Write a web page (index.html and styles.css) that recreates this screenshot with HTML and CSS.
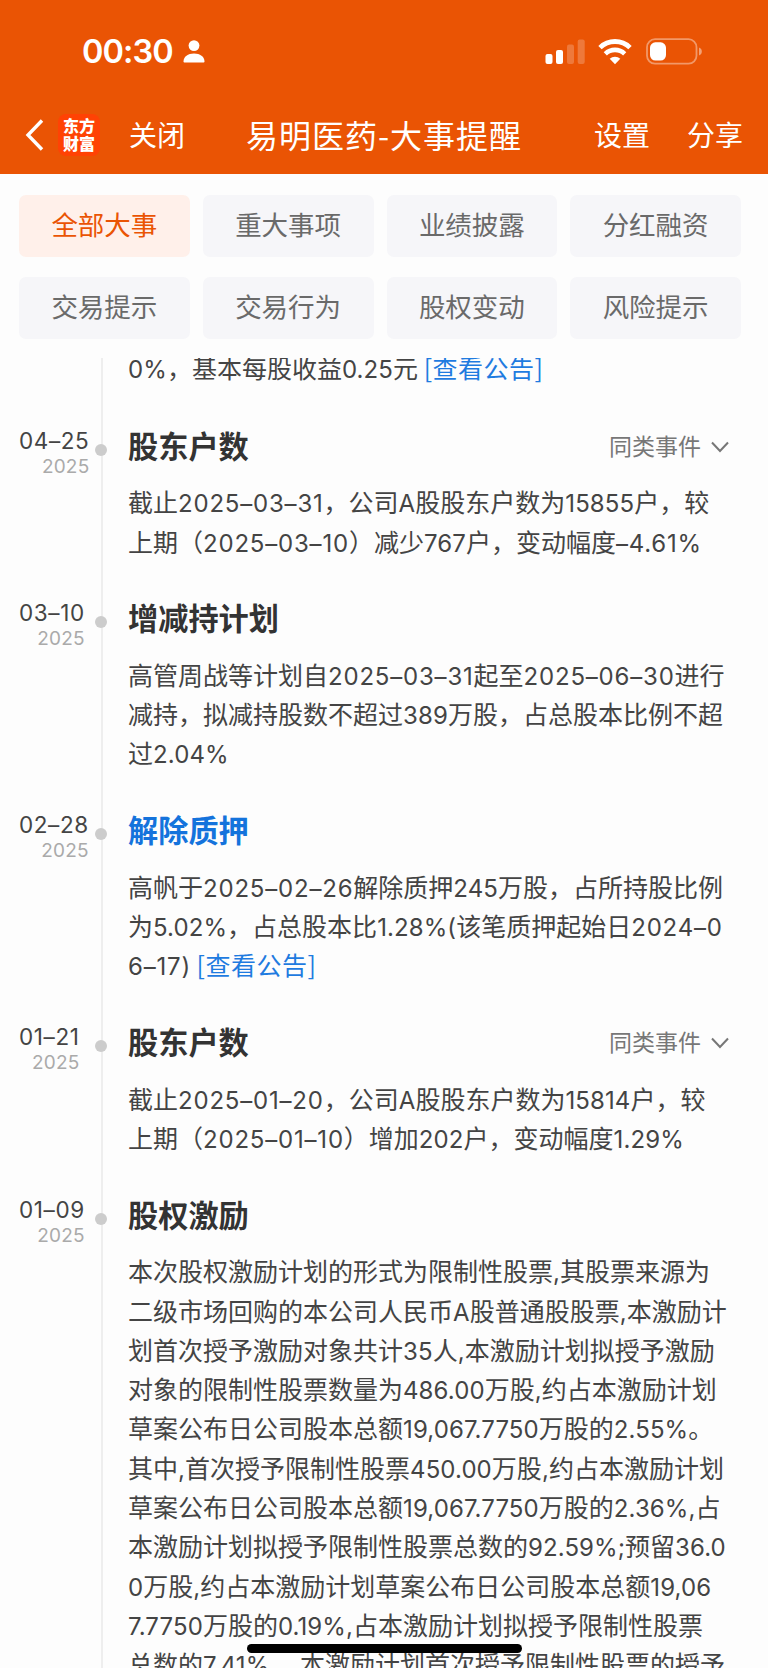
FILE: index.html
```
<!DOCTYPE html>
<html lang="zh-CN">

<head>
    <meta charset="utf-8">
    <title>易明医药-大事提醒</title>
    <link rel="stylesheet" href="styles.css">
</head>

<body>
    <header class="header">
        <div class="status-bar">
            <span class="time">00:30</span>
            <svg class="person" width="22" height="23" viewBox="0 0 22 23" fill="#fff">
                <circle cx="11" cy="5.6" r="5.4" />
                <path d="M0.5 21.5C0.5 16.5 5 13.4 11 13.4s10.5 3.1 10.5 8.1c0 .8-.5 1-1.2 1H1.7c-.7 0-1.2-.2-1.2-1z" />
            </svg>
            <div class="status-icons">
                <svg width="40" height="26" viewBox="0 0 40 26" fill="#fff">
                    <rect x="0.5" y="15" width="7" height="10" rx="2" />
                    <rect x="11" y="11" width="7" height="14" rx="2" />
                    <rect x="22" y="5.5" width="7" height="19.5" rx="2" opacity=".22" />
                    <rect x="32.7" y="0.5" width="7" height="24.5" rx="2" opacity=".22" />
                </svg>
                <svg class="wifi" width="34" height="26" viewBox="0 0 34 26">
                    <path d="M2 8.6a21.5 21.5 0 0 1 30 0" fill="none" stroke="#fff" stroke-width="4.8" />
                    <path d="M7.3 14.8a14 14 0 0 1 19.4 0" fill="none" stroke="#fff" stroke-width="4.6" />
                    <path d="M11.7 19.8a7.6 7.6 0 0 1 10.6 0L17 25.2z" fill="#fff" />
                </svg>
                <svg class="battery" width="57" height="27" viewBox="0 0 57 27">
                    <rect x="1" y="1.2" width="49.5" height="24.5" rx="8" fill="none" stroke="#fff" stroke-opacity=".4" stroke-width="1.8" />
                    <rect x="4" y="4.3" width="16" height="18.2" rx="5.4" fill="#fff" />
                    <path d="M53 9.5c3.8 1.2 3.8 6.800 0 8z" fill="#fff" fill-opacity=".45" />
                </svg>
            </div>
        </div>
        <nav class="nav-bar">
            <svg class="back" width="19" height="32" viewBox="0 0 19 32" fill="none" stroke="#fff" stroke-width="3.4">
                <path d="M17 1.5L3 16l14 14.500" />
            </svg>
            <div class="logo">东方<br>财富</div>
            <span class="close">关闭</span>
            <h1>易明医药-大事提醒</h1>
            <span class="setting">设置</span>
            <span class="share">分享</span>
        </nav>
    </header>

    <div class="tabs">
        <div class="tab active">全部大事</div>
        <div class="tab">重大事项</div>
        <div class="tab">业绩披露</div>
        <div class="tab">分红融资</div>
        <div class="tab">交易提示</div>
        <div class="tab">交易行为</div>
        <div class="tab">股权变动</div>
        <div class="tab">风险提示</div>
    </div>

    <main class="timeline">
        <section class="event first">
            <div class="content">
                <p><b>0%</b>，基本每股收益<b>0.25</b>元 <a>[查看公告]</a></p>
            </div>
        </section>

        <section class="event">
            <div class="date">04–25<small>2025</small></div>
            <div class="content">
                <div class="title">
                    <h2>股东户数</h2>
                    <span class="more">同类事件
                        <svg width="18" height="12" viewBox="0 0 18 12" fill="none" stroke="#777" stroke-width="2"><path d="M1 1.500l8 8.500 8-8.500" /></svg>
                    </span>
                </div>
                <p>截止<b class="d">2025–03–31</b>，公司<b>A</b>股股东户数为<b>15855</b>户，较<br>
                    上期（<b class="d">2025–03–10</b>）减少<b>767</b>户，变动幅度<b class="d">–4.61%</b></p>
            </div>
        </section>

        <section class="event">
            <div class="date">03–10<small>2025</small></div>
            <div class="content">
                <div class="title">
                    <h2>增减持计划</h2>
                </div>
                <p>高管周战等计划自<b class="d">2025–03–31</b>起至<b class="d">2025–06–30</b>进行<br>
                    减持，拟减持股数不超过<b>389</b>万股，占总股本比例不超<br>
                    过<b>2.04%</b></p>
            </div>
        </section>

        <section class="event">
            <div class="date">02–28<small>2025</small></div>
            <div class="content">
                <div class="title">
                    <h2 class="blue">解除质押</h2>
                </div>
                <p>高帆于<b class="d">2025–02–26</b>解除质押<b>245</b>万股，占所持股比例<br>
                    为<b>5.02%</b>，占总股本比<b>1.28%(</b>该笔质押起始日<b class="d">2024–0</b><br>
                    <b class="d">6–17)</b> <a>[查看公告]</a></p>
            </div>
        </section>

        <section class="event">
            <div class="date">01–21<small>2025</small></div>
            <div class="content">
                <div class="title">
                    <h2>股东户数</h2>
                    <span class="more">同类事件
                        <svg width="18" height="12" viewBox="0 0 18 12" fill="none" stroke="#777" stroke-width="2"><path d="M1 1.500l8 8.500 8-8.500" /></svg>
                    </span>
                </div>
                <p>截止<b class="d">2025–01–20</b>，公司<b>A</b>股股东户数为<b>15814</b>户，较<br>
                    上期（<b class="d">2025–01–10</b>）增加<b>202</b>户，变动幅度<b>1.29%</b></p>
            </div>
        </section>

        <section class="event">
            <div class="date">01–09<small>2025</small></div>
            <div class="content">
                <div class="title">
                    <h2>股权激励</h2>
                </div>
                <p>本次股权激励计划的形式为限制性股票<b>,</b>其股票来源为<br>
                    二级市场回购的本公司人民币<b>A</b>股普通股股票<b>,</b>本激励计<br>
                    划首次授予激励对象共计<b>35</b>人<b>,</b>本激励计划拟授予激励<br>
                    对象的限制性股票数量为<b>486.00</b>万股<b>,</b>约占本激励计划<br>
                    草案公布日公司股本总额<b>19,067.7750</b>万股的<b>2.55%</b>。<br>
                    其中<b>,</b>首次授予限制性股票<b>450.00</b>万股<b>,</b>约占本激励计划<br>
                    草案公布日公司股本总额<b>19,067.7750</b>万股的<b>2.36%,</b>占<br>
                    本激励计划拟授予限制性股票总数的<b>92.59%;</b>预留<b>36.0</b><br>
                    <b>0</b>万股<b>,</b>约占本激励计划草案公布日公司股本总额<b>19,06</b><br>
                    <b>7.7750</b>万股的<b>0.19%,</b>占本激励计划拟授予限制性股票<br>
                    总数的<b>7.41%</b>。 本激励计划首次授予限制性股票的授予</p>
            </div>
        </section>
    </main>

    <div class="home-bar"></div>
</body>

</html>
```
FILE: styles.css
```
* {
    box-sizing: border-box;
    margin: 0;
    padding: 0;
}

body {
    width: 768px;
    height: 1668px;
    display: flex;
    flex-direction: column;
    overflow: hidden;
    background-color: #fdfdfd;
    color: #444;
    font-family: Inter, "Noto Sans CJK SC", sans-serif;
}

svg {
    display: block;
    flex: none;
}

.header {
    flex: none;
    height: 174px;
    background-color: #ea5404;
    color: #fff;
}

.status-bar {
    height: 98px;
    padding: 5px 65px 0 82px;
    display: flex;
    align-items: center;
}

.time {
    font-size: 32.5px;
    font-weight: 600;
    letter-spacing: -0.9px;
}

.person {
    margin-left: 10px;
}

.status-icons {
    margin-left: auto;
    display: flex;
    align-items: center;
}

.wifi {
    margin-left: 13px;
}

.battery {
    margin-left: 14px;
}

.nav-bar {
    height: 76px;
    padding: 0 25px 2px;
    display: flex;
    align-items: center;
    font-family: "Noto Sans CJK SC", sans-serif;
    font-size: 28px;
    white-space: nowrap;
}

.nav-bar span,
.nav-bar h1 {
    padding-bottom: 3px;
}

.logo {
    width: 42px;
    height: 42px;
    margin-left: 14px;
    border-radius: 8px;
    background-color: #ff4204;
    font-family: "Noto Sans CJK SC", sans-serif;
    font-size: 16px;
    font-weight: 900;
    line-height: 18px;
    padding-top: 2px;
    text-align: center;
}

.close {
    margin-left: 29px;
}

.nav-bar h1 {
    margin-left: 61px;
    font-size: 32px;
    font-weight: 400;
    letter-spacing: 1px;
}

.setting {
    margin-left: auto;
}

.share {
    margin-left: 37px;
}

.tabs {
    flex: none;
    height: 184px;
    padding: 20.5px 27px 0 19px;
    display: grid;
    grid-template-columns: repeat(4, 1fr);
    grid-auto-rows: 62px;
    gap: 20px 13px;
}

.tab {
    border-radius: 7px;
    background-color: #f6f6f9;
    color: #6a6a6a;
    font-family: "Noto Sans CJK SC", sans-serif;
    font-size: 26.5px;
    line-height: 58px;
    text-align: center;
}

.tab.active {
    background-color: #fff0ea;
    color: #ea5404;
}

.timeline {
    flex: 1;
    min-height: 0;
    overflow: hidden;
    background: linear-gradient(#eee, #eee) 101px 0 / 2px 100% no-repeat;
}

.event {
    position: relative;
    padding: 0 32px 36.5px 128px;
}

.event.first {
    margin-top: -10px;
    padding-bottom: 37.5px;
}

/* dot on the line */
.event:not(.first)::before {
    content: "";
    position: absolute;
    left: 95px;
    top: 19px;
    width: 12px;
    height: 12px;
    border-radius: 50%;
    background-color: #ccc;
}

.date {
    position: absolute;
    left: 19px;
    top: 1px;
    font-size: 22.5px;
    line-height: 29px;
    letter-spacing: 0.6px;
    text-align: right;
}

.date small {
    display: block;
    color: #aaa;
    font-size: 19px;
    line-height: 24px;
    letter-spacing: 0.2px;
}

.title {
    height: 44px;
    margin-bottom: 13.5px;
    display: flex;
    justify-content: space-between;
    align-items: center;
}

.title h2 {
    color: #333;
    font-size: 30.2px;
    font-weight: 700;
    line-height: 44px;
}

.title .blue {
    color: #1473dc;
}

.more {
    display: flex;
    align-items: center;
    gap: 10px;
    padding-right: 7px;
    color: #777;
    font-size: 23px;
    line-height: 44px;
}

.content p {
    font-family: "Noto Sans CJK SC", sans-serif;
    font-size: 25px;
    line-height: 39.3px;
    white-space: nowrap;
}

/* numbers and latin */
.content b {
    font-family: Inter, sans-serif;
    font-size: 24px;
    font-weight: 400;
    line-height: 1;
    letter-spacing: 0.1px;
}

/* dates with dashes run a bit wider */
.content .d {
    letter-spacing: 0.8px;
}

.content a {
    color: #1f7be0;
    letter-spacing: 0.5px;
}

.home-bar {
    position: fixed;
    left: 247px;
    bottom: 15px;
    width: 275px;
    height: 9px;
    border-radius: 5px;
    background-color: #000;
}
```
